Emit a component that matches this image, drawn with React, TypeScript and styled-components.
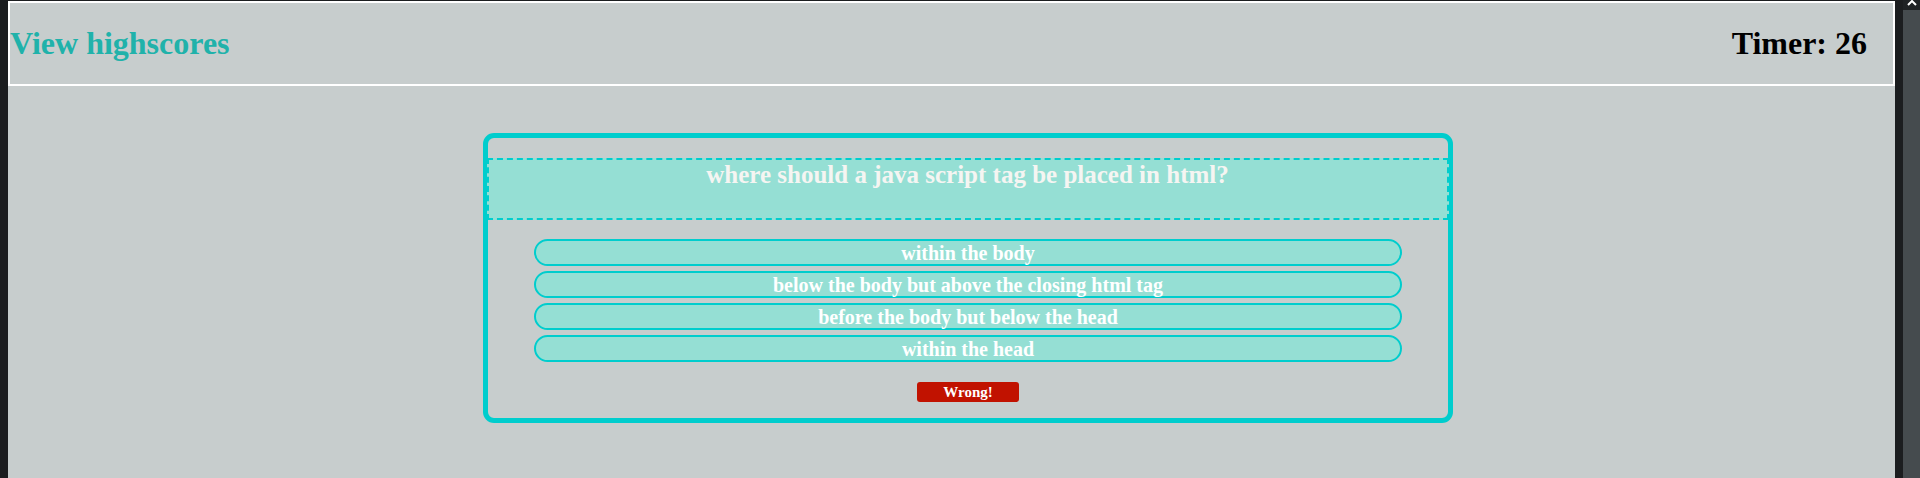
import React from "react";
import styled, { createGlobalStyle } from "styled-components";

const Global = createGlobalStyle`
  html, body {
    margin: 0;
    padding: 0;
    background: #1b1d1f;
    height: 478px;
    overflow: hidden;
  }
  #root { height: 478px; }
`;

const Viewport = styled.div`
  display: flex;
  height: 478px;
`;

const Page = styled.main`
  flex: 1;
  margin: 1px 8px 0 8px;
  background: #c7cdcd;
  display: flex;
  flex-direction: column;
  font-family: "Liberation Serif", "Times New Roman", serif;
`;

const Header = styled.header`
  display: flex;
  justify-content: space-between;
  align-items: center;
  height: 81px;
  border: 2px solid #ffffff;
  padding-right: 26px;
`;

const Title = styled.h1<{ $tone: string }>`
  margin: 0;
  font-size: 32px;
  font-weight: bold;
  line-height: 37px;
  color: ${(p) => p.$tone};
`;

const Card = styled.section`
  box-sizing: border-box;
  width: 970px;
  height: 290px;
  margin: 47px 0 0 475px;
  border: 5px solid #00cdcd;
  border-radius: 11px;
  padding-top: 20px;
  display: flex;
  flex-direction: column;
  align-items: center;
`;

const Question = styled.div`
  box-sizing: border-box;
  width: calc(100% + 2px);
  margin-left: -1px;
  height: 62px;
  border: 2px dashed #00cdcd;
  background: #95dfd4;
  padding-top: 1px;
`;

const QuestionText = styled.h2`
  margin: 0;
  text-align: center;
  font-size: 25px;
  font-weight: bold;
  line-height: 28px;
  color: #f5f5f2;
`;

const Answers = styled.div`
  display: flex;
  flex-direction: column;
  align-items: center;
  gap: 5px;
  margin-top: 19px;
  width: 100%;
`;

const Answer = styled.button`
  box-sizing: border-box;
  width: 868px;
  height: 27px;
  padding: 1px 0 0;
  border: 2px solid #00cdcd;
  border-radius: 14px;
  background: #95dfd4;
  color: #ffffff;
  font-family: "Liberation Serif", "Times New Roman", serif;
  font-size: 20px;
  font-weight: bold;
  line-height: 22px;
  cursor: pointer;
`;

const Feedback = styled.div`
  box-sizing: border-box;
  margin-top: 20px;
  width: 102px;
  height: 20px;
  padding-top: 1px;
  border-radius: 3px;
  background: #c11200;
  color: #ffffff;
  text-align: center;
  font-size: 15px;
  font-weight: bold;
  line-height: 19px;
`;

const Scrollbar = styled.div`
  width: 17px;
  background: #454b4e;
  display: flex;
  flex-direction: column;
`;

const ScrollButton = styled.div`
  height: 10px;
  background: #1f2224;
  display: flex;
  justify-content: center;
  align-items: flex-start;
`;

const answers = [
  "within the body",
  "below the body but above the closing html tag",
  "before the body but below the head",
  "within the head",
];

export default function App() {
  return (
    <>
      <Global />
      <Viewport>
        <Page>
          <Header>
            <Title $tone="#20b2aa">View highscores</Title>
            <Title $tone="#000000">Timer: 26</Title>
          </Header>
          <Card>
            <Question>
              <QuestionText>where should a java script tag be placed in html?</QuestionText>
            </Question>
            <Answers>
              {answers.map((a) => (
                <Answer key={a}>{a}</Answer>
              ))}
            </Answers>
            <Feedback>Wrong!</Feedback>
          </Card>
        </Page>
        <Scrollbar>
          <ScrollButton>
            <svg width="10" height="6" viewBox="0 0 10 6">
              <path d="M1 5 L5 1 L9 5" stroke="#ffffff" strokeWidth="2" fill="none" />
            </svg>
          </ScrollButton>
        </Scrollbar>
      </Viewport>
    </>
  );
}
